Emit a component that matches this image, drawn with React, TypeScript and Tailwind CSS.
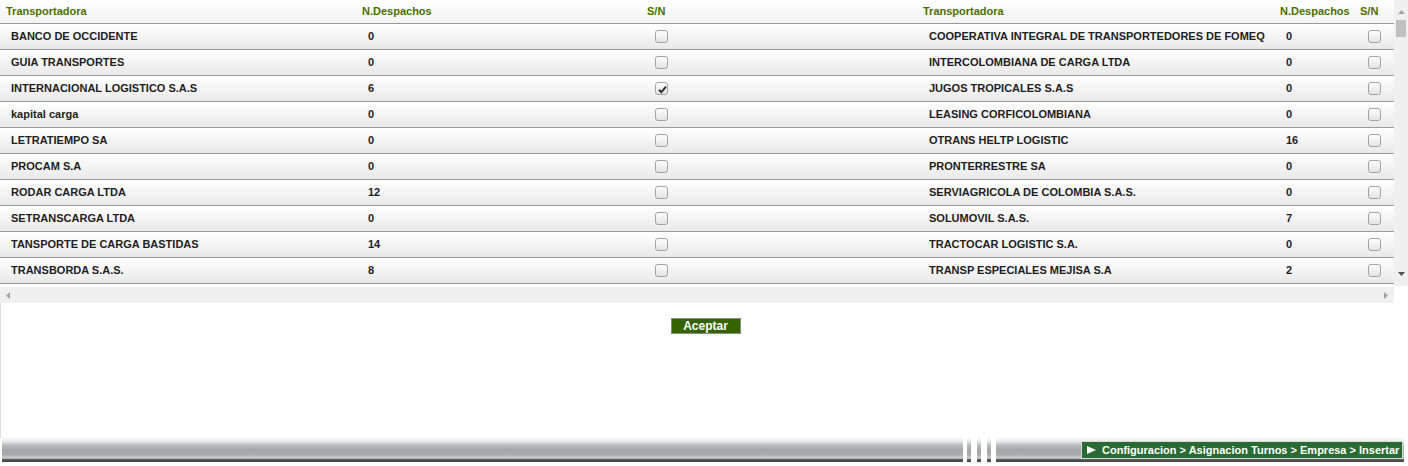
import React from 'react';

// Asignación de turnos — tabla de transportadoras en dos columnas + barra inferior.

type Row = { name: string; count: number; checked?: boolean };

const LEFT: Row[] = [
  { name: 'BANCO DE OCCIDENTE', count: 0 },
  { name: 'GUIA TRANSPORTES', count: 0 },
  { name: 'INTERNACIONAL LOGISTICO S.A.S', count: 6, checked: true },
  { name: 'kapital carga', count: 0 },
  { name: 'LETRATIEMPO SA', count: 0 },
  { name: 'PROCAM S.A', count: 0 },
  { name: 'RODAR CARGA LTDA', count: 12 },
  { name: 'SETRANSCARGA LTDA', count: 0 },
  { name: 'TANSPORTE DE CARGA BASTIDAS', count: 14 },
  { name: 'TRANSBORDA S.A.S.', count: 8 },
];

const RIGHT: Row[] = [
  { name: 'COOPERATIVA INTEGRAL DE TRANSPORTEDORES DE FOMEQ', count: 0 },
  { name: 'INTERCOLOMBIANA DE CARGA LTDA', count: 0 },
  { name: 'JUGOS TROPICALES S.A.S', count: 0 },
  { name: 'LEASING CORFICOLOMBIANA', count: 0 },
  { name: 'OTRANS HELTP LOGISTIC', count: 16 },
  { name: 'PRONTERRESTRE SA', count: 0 },
  { name: 'SERVIAGRICOLA DE COLOMBIA S.A.S.', count: 0 },
  { name: 'SOLUMOVIL S.A.S.', count: 7 },
  { name: 'TRACTOCAR LOGISTIC S.A.', count: 0 },
  { name: 'TRANSP ESPECIALES MEJISA S.A', count: 2 },
];

const GRID = 'grid grid-cols-[356px_285px_276px_357px_80px_40px]';

// barra metálica del pie
const METAL =
  'bg-[linear-gradient(to_bottom,#f7f7f7_0%,#eceded_12%,#b9bcbe_30%,#a5a8ab_50%,#a7aaad_68%,#cfd1d2_84%,#555_90%,#444_100%)]';

function Check({ checked }: { checked?: boolean }) {
  return (
    <span className="relative block w-[13px] h-[13px] rounded-[3px] border border-[#a3a3a3] bg-gradient-to-b from-[#fdfdfd] to-[#e4e4e4]">
      {checked && (
        <svg viewBox="0 0 13 13" className="absolute inset-0 w-[13px] h-[13px]">
          <path d="M3 6.8 L5.3 9.2 L10 3.6" fill="none" stroke="#333" strokeWidth="2" />
        </svg>
      )}
    </span>
  );
}

function Header() {
  const h = 'pl-[6px] text-[#4b7000]';
  return (
    <div className={`${GRID} h-[24px] items-center border-b border-[#9a9a9a] bg-gradient-to-b from-white to-[#f3f3f3] text-[11px] font-bold`}>
      <span className={h}>Transportadora</span>
      <span className={h}>N.Despachos</span>
      <span className={h}>S/N</span>
      <span className={h}>Transportadora</span>
      <span className={h}>N.Despachos</span>
      <span className={h}>S/N</span>
    </div>
  );
}

function TableRow({ l, r }: { l: Row; r: Row }) {
  return (
    <div className={`${GRID} h-[26px] items-center border-b border-[#9a9a9a] bg-gradient-to-b from-white to-[#e9e9e9] text-[11px] font-bold text-[#1e1e1e]`}>
      <span className="pl-[11px] whitespace-nowrap">{l.name}</span>
      <span className="pl-[12px]">{l.count}</span>
      <span className="pl-[14px]"><Check checked={l.checked} /></span>
      <span className="pl-[12px] whitespace-nowrap">{r.name}</span>
      <span className="pl-[12px]">{r.count}</span>
      <span className="pl-[14px]"><Check checked={r.checked} /></span>
    </div>
  );
}

export default function App() {
  return (
    <div className="w-[1408px] h-[466px] bg-white overflow-hidden font-['Liberation_Sans',Arial,sans-serif] flex flex-col">
      {/* Tabla con scroll */}
      <div className="flex h-[303px]">
        <div className="w-[1394px] flex flex-col">
          <Header />
          {LEFT.map((l, i) => (
            <TableRow key={l.name} l={l} r={RIGHT[i]} />
          ))}
          <div className="h-[3px]" />
          <div className="h-[16px] bg-[#f0f0f0] flex items-center justify-between px-[6px]">
            <svg width="4" height="7" viewBox="0 0 4 7"><path d="M4 0 L0 3.5 L4 7Z" fill="#a3a3a3" /></svg>
            <svg width="4" height="7" viewBox="0 0 4 7"><path d="M0 0 L4 3.5 L0 7Z" fill="#a3a3a3" /></svg>
          </div>
        </div>
        <div className="w-[14px] h-[286px] bg-[#f0f0f0] flex flex-col items-center">
          <svg width="7" height="4" viewBox="0 0 7 4" className="mt-[10px]"><path d="M0 4 L3.5 0 L7 4Z" fill="#a3a3a3" /></svg>
          <div className="mt-[6px] w-[10px] h-[17px] bg-[#c1c1c1]" />
          <div className="flex-1" />
          <svg width="7" height="4" viewBox="0 0 7 4" className="mb-[10px]"><path d="M0 0 L3.5 4 L7 0Z" fill="#505050" /></svg>
        </div>
      </div>

      {/* Botón */}
      <div className="flex-1 border-l border-[#dcdcdc] flex flex-col">
        <div className="flex justify-center pt-[15px] pl-[2px]">
          <button className="w-[70px] h-[16px] bg-[#346300] border border-[#8a8a8a] text-white text-[12px] font-bold leading-none">
            Aceptar
          </button>
        </div>
      </div>

      {/* Barra inferior */}
      <div className="h-[28px] flex items-start pl-[2px]">
        <div className={`h-[24px] w-[961px] ${METAL}`} />
        <div className={`ml-[4px] h-[24px] w-[4px] ${METAL}`} />
        <div className={`ml-[6px] h-[24px] w-[4px] ${METAL}`} />
        <div className={`ml-[6px] h-[24px] w-[4px] ${METAL}`} />
        <div className={`ml-[5px] h-[24px] w-[86px] ${METAL}`} />
        <div className={`h-[24px] w-[324px] ${METAL} flex items-center -ml-[2px]`}>
          <div className="ml-[1px] h-[18px] w-[322px] bg-[#2a6b34] border border-[#d8dcd8] flex items-center pl-[5px] gap-[6px] text-white text-[11px] font-bold whitespace-nowrap">
            <svg width="9" height="8" viewBox="0 0 9 8"><path d="M0 0 L9 4 L0 8Z" fill="#fff" /></svg>
            <span>Configuracion &gt; Asignacion Turnos &gt; Empresa &gt; Insertar</span>
          </div>
        </div>
      </div>
    </div>
  );
}
